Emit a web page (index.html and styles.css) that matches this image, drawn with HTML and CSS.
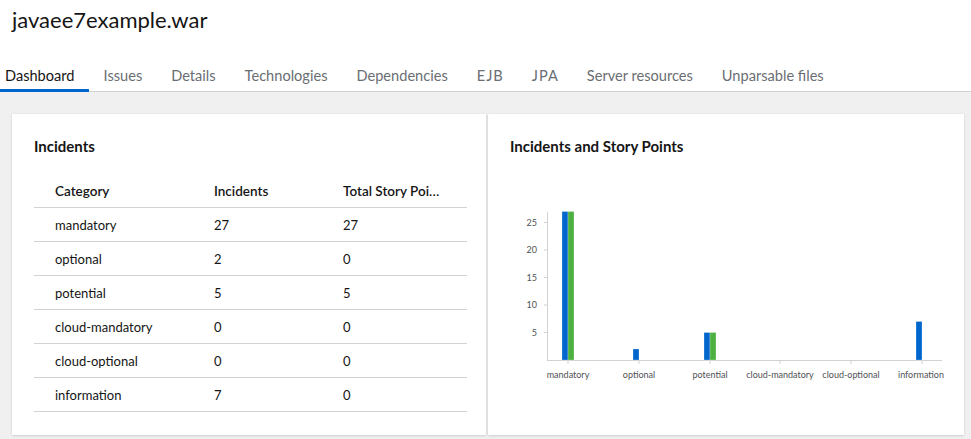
FILE: index.html
```html
<!DOCTYPE html>
<html>
    <head>
        <title>javaee7example.war</title>
        <link rel="stylesheet" href="styles.css">
    </head>
    <body>
        <div class="header">
            <h1 class="header__title">javaee7example.war</h1>
        </div>

        <ul class="tabs">
            <li class="tabs__item tabs__item--active">Dashboard</li>
            <li class="tabs__item">Issues</li>
            <li class="tabs__item">Details</li>
            <li class="tabs__item">Technologies</li>
            <li class="tabs__item">Dependencies</li>
            <li class="tabs__item tabs__item--short">EJB</li>
            <li class="tabs__item tabs__item--short">JPA</li>
            <li class="tabs__item">Server resources</li>
            <li class="tabs__item">Unparsable files</li>
        </ul>

        <div class="main">
            <div class="main__grid">
                <div class="card">
                    <h2 class="card__title">Incidents</h2>
                    <table class="incidents">
                        <thead>
                            <tr>
                                <th class="col-category">Category</th>
                                <th class="col-incidents">Incidents</th>
                                <th class="col-points"><span class="truncate">Total Story Points</span></th>
                            </tr>
                        </thead>
                        <tbody>
                            <tr><td>mandatory</td><td>27</td><td>27</td></tr>
                            <tr><td>optional</td><td>2</td><td>0</td></tr>
                            <tr><td>potential</td><td>5</td><td>5</td></tr>
                            <tr><td>cloud-mandatory</td><td>0</td><td>0</td></tr>
                            <tr><td>cloud-optional</td><td>0</td><td>0</td></tr>
                            <tr><td>information</td><td>7</td><td>0</td></tr>
                        </tbody>
                    </table>
                </div>

                <div class="card">
                    <h2 class="card__title">Incidents and Story Points</h2>
                    <svg class="chart" width="432" height="190" viewBox="0 0 432 190">
                        <!-- y axis -->
                        <line class="axis" x1="37.5" y1="12" x2="37.5" y2="160"></line>
                        <line class="axis" x1="34" y1="22.5" x2="37" y2="22.5"></line>
                        <line class="axis" x1="34" y1="50" x2="37" y2="50"></line>
                        <line class="axis" x1="34" y1="77.5" x2="37" y2="77.5"></line>
                        <line class="axis" x1="34" y1="105" x2="37" y2="105"></line>
                        <line class="axis" x1="34" y1="132.5" x2="37" y2="132.5"></line>
                        <text class="tick" x="27" y="25.5" text-anchor="end">25</text>
                        <text class="tick" x="27" y="53" text-anchor="end">20</text>
                        <text class="tick" x="27" y="80.5" text-anchor="end">15</text>
                        <text class="tick" x="27" y="108" text-anchor="end">10</text>
                        <text class="tick" x="27" y="135.5" text-anchor="end">5</text>

                        <!-- x axis -->
                        <line class="axis" x1="37" y1="160.5" x2="432" y2="160.5"></line>
                        <line class="axis" x1="58" y1="161" x2="58" y2="164"></line>
                        <line class="axis" x1="129" y1="161" x2="129" y2="164"></line>
                        <line class="axis" x1="200" y1="161" x2="200" y2="164"></line>
                        <line class="axis" x1="270" y1="161" x2="270" y2="164"></line>
                        <line class="axis" x1="341" y1="161" x2="341" y2="164"></line>
                        <line class="axis" x1="412" y1="161" x2="412" y2="164"></line>
                        <text class="tick" x="58" y="178" text-anchor="middle">mandatory</text>
                        <text class="tick" x="129" y="178" text-anchor="middle">optional</text>
                        <text class="tick" x="200" y="178" text-anchor="middle">potential</text>
                        <text class="tick" x="270" y="178" text-anchor="middle">cloud-mandatory</text>
                        <text class="tick" x="341" y="178" text-anchor="middle">cloud-optional</text>
                        <text class="tick" x="411" y="178" text-anchor="middle">information</text>

                        <!-- bars: incidents (blue) and story points (green) -->
                        <rect class="bar bar--incidents" x="52" y="11.5" width="6" height="148.5"></rect>
                        <rect class="bar bar--points" x="58" y="11.5" width="6" height="148.5"></rect>
                        <rect class="bar bar--incidents" x="123" y="149" width="6" height="11"></rect>
                        <rect class="bar bar--incidents" x="194" y="132.5" width="6" height="27.5"></rect>
                        <rect class="bar bar--points" x="200" y="132.5" width="6" height="27.5"></rect>
                        <rect class="bar bar--incidents" x="406" y="121.5" width="6" height="38.5"></rect>
                    </svg>
                </div>
            </div>
        </div>
    </body>
</html>
```

FILE: styles.css
```css
html, body{
    margin: 0;
    padding: 0;
    height: 100%;
}
body{
    font-family: Lato, "Open Sans", sans-serif;
    color: #151515;
    background: #f0f0f0;
    display: flex;
    flex-direction: column;
}
.header{
    background: #fff;
    padding: 6px 12px 0 12px;
}
.header__title{
    margin: 0;
    font-size: 22px;
    font-weight: 400;
    line-height: 28px;
}
.tabs{
    display: flex;
    margin: 0;
    padding: 26px 0 0 0;
    list-style: none;
    background: #fff;
    border-bottom: 1px solid #d2d2d2;
}
.tabs__item{
    padding: 0 14.5px;
    height: 32px;
    line-height: 32px;
    font-size: 14.6px;
    color: #6a6e73;
    border-bottom: 3px solid transparent;
    margin-bottom: -1px;
    box-sizing: border-box;
}
.tabs__item:first-child{
    padding-left: 5px;
}
.tabs__item--short{
    letter-spacing: 1px;
    padding-right: 13.5px;
}
.tabs__item--active{
    color: #151515;
    border-bottom-color: #06c;
}
.main{
    flex: 1;
    padding: 22px 7px 0 12px;
}
.main__grid{
    display: grid;
    grid-template-columns: 474px 1fr;
    gap: 2px;
}
.card{
    background: #fff;
    box-shadow: 0 1px 2px rgba(3, 3, 3, 0.12), 0 0 2px rgba(3, 3, 3, 0.06);
    padding: 20px 19px 22px 22px;
    height: 321px;
    box-sizing: border-box;
}
.card__title{
    margin: 0;
    font-size: 15px;
    font-weight: 700;
    line-height: 24px;
}
.incidents{
    width: 100%;
    margin-top: 16px;
    border-collapse: collapse;
    table-layout: fixed;
    font-size: 13px;
}
.incidents th,
.incidents td{
    height: 33px;
    padding: 0 0 0 21px;
    text-align: left;
    border-bottom: 1px solid #d2d2d2;
    white-space: nowrap;
    overflow: hidden;
}
.incidents th{
    font-weight: 600;
    font-size: 13.5px;
}
.col-category{
    width: 138px;
}
.col-incidents{
    width: 108px;
}
.truncate{
    display: block;
    max-width: 97px;
    overflow: hidden;
    text-overflow: ellipsis;
}
.chart{
    display: block;
    margin-top: 42px;
    overflow: visible;
}
.axis{
    stroke: #d2d2d2;
    stroke-width: 1;
}
.tick{
    font-family: Lato, "Open Sans", sans-serif;
    font-size: 9px;
    fill: #4f5255;
}
.bar{
    stroke: #fff;
    stroke-width: 0.5;
    stroke-opacity: 0.5;
}
.bar--incidents{
    fill: #06c;
}
.bar--points{
    fill: #4cb140;
}
```
